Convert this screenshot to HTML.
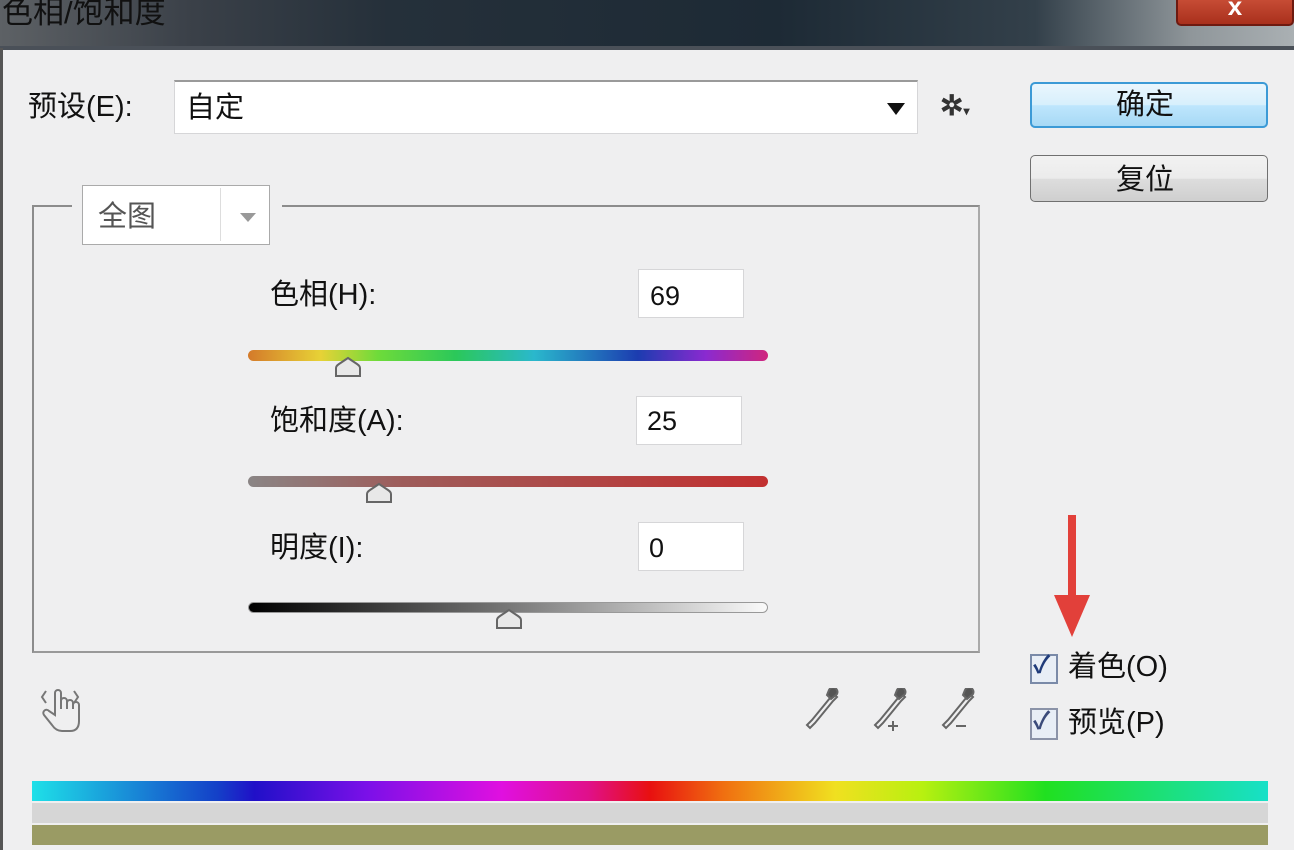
<!DOCTYPE html>
<html><head><meta charset="utf-8"><style>
*{margin:0;padding:0;box-sizing:border-box}
body{width:1294px;height:850px;overflow:hidden;background:#efeff0;font-family:"Liberation Sans","Noto Sans CJK SC",sans-serif;color:#111;position:relative}
.a{position:absolute}
.t{font-size:29px;line-height:1;white-space:nowrap}
.box{background:#fff;border:1px solid #d6d6d8}
.bar{position:absolute;left:248px;width:520px;height:11px;border-radius:6px}
</style></head><body>
<div class="a" style="left:0;top:0;width:1294px;height:48px;background:linear-gradient(90deg,#5d6165 0%,#3a4048 15%,#25303a 30%,#1d2a35 60%,#33404a 80%,#8f969a 92%,#aab0b3 100%)"></div>
<div class="a t" style="left:2px;top:-3px;font-size:31px;color:#111">色相/饱和度</div>
<div class="a" style="left:1176px;top:-10px;width:118px;height:36px;background:linear-gradient(#d0553d,#a9301c);border:2px solid #6e1a10;border-radius:5px;color:#fff;text-align:center;font-size:26px;font-weight:bold;line-height:28px">x</div>
<div class="a" style="left:0;top:46px;width:1294px;height:4px;background:#4a5058"></div>
<div class="a" style="left:0;top:48px;width:3px;height:802px;background:#555"></div>

<div class="a t" style="left:28px;top:93px">预设(E):</div>
<div class="a box" style="left:174px;top:80px;width:744px;height:54px;border-top:2px solid #9a9a9a"></div>
<div class="a t" style="left:186px;top:94px">自定</div>
<div class="a" style="left:887px;top:103px;width:0;height:0;border-left:9px solid transparent;border-right:9px solid transparent;border-top:12px solid #111"></div>
<div class="a t" style="left:940px;top:92px;font-size:28px;color:#333;font-weight:bold">✲<span style="font-size:12px">▾</span></div>

<div class="a" style="left:1030px;top:82px;width:238px;height:46px;border:2px solid #3c9ad6;border-radius:5px;background:linear-gradient(#eaf6fd 0%,#d7effc 50%,#bee6fd 51%,#a7d9f5 100%)"></div>
<div class="a t" style="left:1116px;top:91px">确定</div>
<div class="a" style="left:1030px;top:155px;width:238px;height:47px;border:1px solid #707070;border-radius:5px;background:linear-gradient(#f2f2f2 0%,#ebebeb 50%,#dddddd 51%,#cfcfcf 100%)"></div>
<div class="a t" style="left:1116px;top:166px">复位</div>

<div class="a" style="left:32px;top:205px;width:948px;height:448px;border:2px solid #8c8c8c;border-right-color:#aaa;border-bottom-color:#999"></div>
<div class="a" style="left:72px;top:190px;width:210px;height:40px;background:#efeff0"></div>
<div class="a box" style="left:82px;top:185px;width:188px;height:60px;border-color:#aaa"></div>
<div class="a t" style="left:98px;top:203px;color:#555">全图</div>
<div class="a" style="left:220px;top:188px;width:1px;height:53px;background:#ddd"></div>
<div class="a" style="left:240px;top:213px;width:0;height:0;border-left:8px solid transparent;border-right:8px solid transparent;border-top:9px solid #999"></div>

<div class="a t" style="left:270px;top:281px">色相(H):</div>
<div class="a box" style="left:638px;top:269px;width:106px;height:49px"></div>
<div class="a t" style="left:650px;top:283px;font-size:27px">69</div>
<div class="bar" style="top:350px;background:linear-gradient(90deg,#d47a2a,#e7d236 14%,#6edb3a 25%,#2bc85a 40%,#2ab8cc 55%,#1c3cb0 75%,#8a2ad0 88%,#d0257e 100%)"></div>

<div class="a t" style="left:270px;top:407px">饱和度(A):</div>
<div class="a box" style="left:636px;top:396px;width:106px;height:49px"></div>
<div class="a t" style="left:647px;top:408px;font-size:27px">25</div>
<div class="bar" style="top:476px;background:linear-gradient(90deg,#8a8585,#9e5c5a 30%,#c23030 100%)"></div>

<div class="a t" style="left:270px;top:534px">明度(I):</div>
<div class="a box" style="left:638px;top:522px;width:106px;height:49px"></div>
<div class="a t" style="left:649px;top:535px;font-size:27px">0</div>
<div class="bar" style="top:602px;background:linear-gradient(90deg,#000,#777 50%,#fafafa 100%);border:1px solid #999"></div>

<svg class="a" style="left:333px;top:356px" width="30" height="22"><path d="M3 20 V12 Q3 10 6 8 L15 2 L24 8 Q27 10 27 12 V20 Z" fill="#e8e8e8" stroke="#666" stroke-width="2"/></svg>
<svg class="a" style="left:364px;top:482px" width="30" height="22"><path d="M3 20 V12 Q3 10 6 8 L15 2 L24 8 Q27 10 27 12 V20 Z" fill="#e8e8e8" stroke="#666" stroke-width="2"/></svg>
<svg class="a" style="left:494px;top:608px" width="30" height="22"><path d="M3 20 V12 Q3 10 6 8 L15 2 L24 8 Q27 10 27 12 V20 Z" fill="#e8e8e8" stroke="#666" stroke-width="2"/></svg>

<svg class="a" style="left:38px;top:685px" width="50" height="50"><g fill="none" stroke="#777" stroke-width="2"><path d="M8 6 L4 12 L8 18 M36 6 L40 12 L36 18"/><path d="M17 30 V8 a3 3 0 0 1 6 0 V24 V16 a3 3 0 0 1 6 0 V24 V18 a3 3 0 0 1 6 0 V24 V20 a3 3 0 0 1 6 0 V36 Q41 46 32 46 H24 Q18 46 14 40 L6 30 a3 3 0 0 1 5 -4 Z"/></g></svg>
<svg class="a" style="left:796px;top:688px" width="200" height="48"><g stroke="#666" stroke-width="2"><path d="M36 4 l5 5 -4 4 -18 22 -5 5 -3 -3 5 -5 18 -22 z" fill="none"/><path d="M33 2 a4 4 0 0 1 8 4 l-6 5 -4 -4 z" fill="#555"/><path d="M104 4 l5 5 -4 4 -18 22 -5 5 -3 -3 5 -5 18 -22 z" fill="none"/><path d="M101 2 a4 4 0 0 1 8 4 l-6 5 -4 -4 z" fill="#555"/><path d="M92 38 h10 M97 33 v10"/><path d="M172 4 l5 5 -4 4 -18 22 -5 5 -3 -3 5 -5 18 -22 z" fill="none"/><path d="M169 2 a4 4 0 0 1 8 4 l-6 5 -4 -4 z" fill="#555"/><path d="M160 38 h10"/></g></svg>

<svg class="a" style="left:1048px;top:515px" width="48" height="125"><rect x="20" y="0" width="8" height="85" fill="#e2403a"/><path d="M6 80 L24 122 L42 80 Z" fill="#e2403a"/></svg>

<div class="a" style="left:1030px;top:654px;width:28px;height:30px;border:2px solid #7a8aa8;background:#e8eef6"></div>
<div class="a t" style="left:1033px;top:654px;color:#1f3b7a;font-size:24px;font-weight:bold">✓</div>
<div class="a t" style="left:1068px;top:653px">着色(O)</div>
<div class="a" style="left:1030px;top:708px;width:28px;height:32px;border:2px solid #8b93a8;background:#e8eef6"></div>
<div class="a t" style="left:1033px;top:710px;color:#3b4b7a;font-size:24px;font-weight:bold">✓</div>
<div class="a t" style="left:1068px;top:709px">预览(P)</div>

<div class="a" style="left:32px;top:781px;width:1236px;height:20px;background:linear-gradient(90deg,#1ee0e8,#1440c8 15%,#2010c8 18%,#7a10e8 27%,#e010e0 38%,#e0108a 45%,#e81010 50%,#f07010 56%,#f0e020 65%,#b8f010 72%,#20e020 82%,#18e0c8 100%)"></div>
<div class="a" style="left:32px;top:803px;width:1236px;height:20px;background:#d6d6d6"></div>
<div class="a" style="left:32px;top:825px;width:1236px;height:20px;background:#9a9b64"></div>
</body></html>
